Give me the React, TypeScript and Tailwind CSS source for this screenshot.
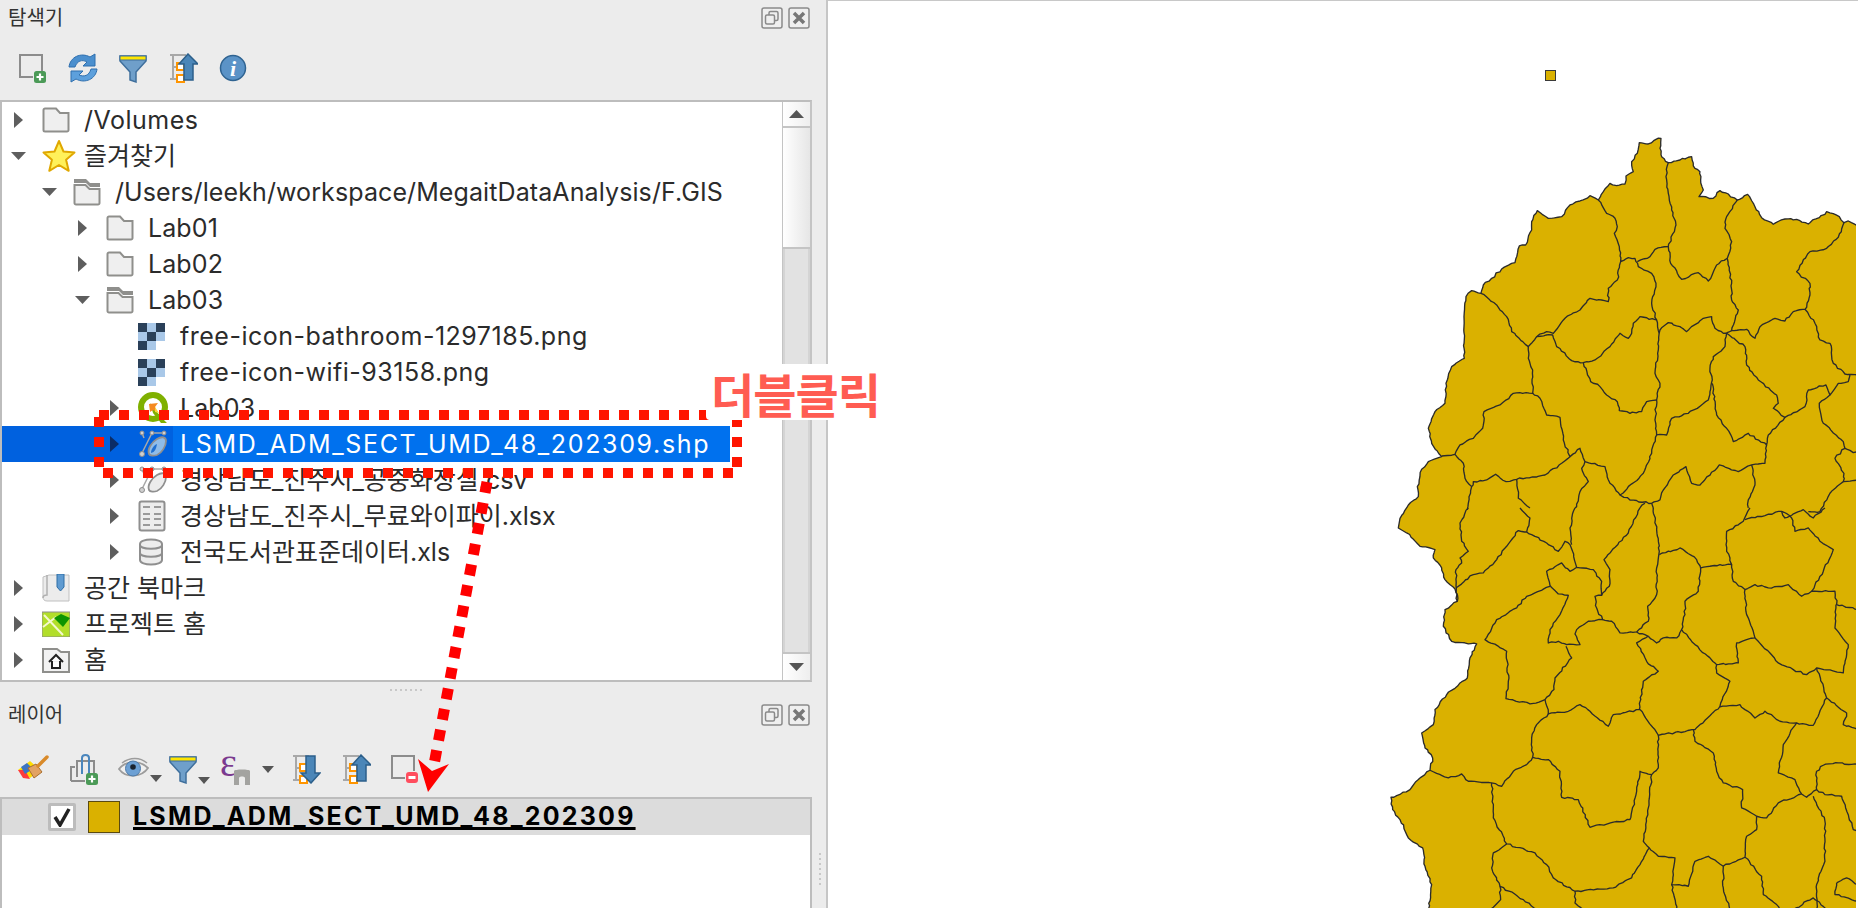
import type { ReactNode } from "react";

const uiFont = "font-['Inter','Noto_Sans_CJK_KR',sans-serif]";

// map traced in 3x crop coordinates, the lower crop starts 1164 units further down
const coastTop =
  "1434,318 1405,303 1392,308 1378,290 1340,275 1318,293 1298,300 1285,312 1250,298 1215,297 1180,313 1145,293 1125,260 1103,223 1072,240 1045,222 1020,212 1000,235 957,230 970,210 962,180 960,155 945,145 935,110 900,120 865,128 845,110 840,85 843,55 828,58 805,72 778,68 772,100 755,125 760,155 738,168 735,192 710,197 690,190 670,215 655,240 630,227 600,243 570,255 545,290 505,295 472,272 455,305 455,330 437,375 418,378 405,428 365,447 335,475 310,495 303,520 275,512 258,530 252,620 253,715 215,740 198,790 195,850 165,875 145,925 155,970 185,1010 145,1025 125,1048 112,1100 115,1130 85,1155 60,1195";
const coastBottom =
  "55,60 80,75 120,115 165,125 160,150 185,180 195,215 225,243 232,280 195,305 190,355 215,400 265,408 290,408 270,450 262,510 240,525 200,560 165,605 160,650 125,675 135,720 158,750 150,787 115,815 90,845 50,863 33,868 38,905 60,935 85,990 128,1020 135,1075 155,1130 145,1205";

const linesTop = [
  "1072,240 1040,290 1035,325 1055,365 1042,415 1010,435 985,483 955,458 905,478 872,430 865,380 888,315 875,270 865,220 858,170 865,128",
  "865,380 825,388 810,410 772,425",
  "655,240 680,280 705,295 712,320 703,340 718,380 722,425 745,413 765,415 775,440 815,460 828,490 815,550 830,600 838,640",
  "722,425 712,480 685,505 685,545 630,535 600,570 555,595 520,640 500,635 470,650 445,680 395,635 380,590 350,555 303,520",
  "445,680 445,715 458,750 458,820 400,820 360,855 312,875 308,925 280,955 240,975 225,1003 185,1008",
  "458,820 480,835 500,885 540,892 550,960 570,1010 545,1030 495,1065 410,1078 378,1085 347,1063 320,1080 280,1085 275,1100 255,1075 250,1030 225,1003",
  "470,650 518,645 530,680 575,722 610,728 645,720 690,680 720,640 745,655 755,640 760,610 780,590 828,600",
  "610,728 632,785 660,800 680,825 712,845 718,872 750,880 785,875 800,845 830,840",
  "1042,415 1055,490 1055,540 1075,570 1055,632 1030,640 1005,625 995,590 970,595 920,635 900,620 865,608 840,630 833,700 825,760 840,790 830,840 825,900 830,945 860,945 875,895 925,880 985,840 990,815 997,780 990,745 1000,710 1035,680 1040,640",
  "1040,640 1095,680 1100,735 1135,780 1190,825 1195,850 1180,865 1215,892 1165,945 1160,975 1105,940 1060,965 1040,925 1010,885 997,790",
  "1055,632 1100,628 1125,655 1140,620 1185,595 1215,603 1240,575 1275,568 1290,525 1290,490 1250,455 1290,395 1340,385 1375,352 1392,308",
  "1275,568 1305,610 1320,660 1350,670 1360,730 1395,762 1434,765",
  "1410,765 1405,785 1375,790 1350,825 1338,795 1285,810 1275,860 1215,892",
  "1350,825 1318,850 1330,910 1390,965 1395,985 1420,998 1434,995",
  "1395,985 1365,1015 1392,1060 1390,1085 1350,1120 1320,1175 1285,1175",
  "1390,1085 1434,1080",
  "830,945 815,1000 790,1060 720,1125 690,1090 675,1040 615,1025 600,985 570,1010",
  "1160,975 1155,1030 1115,1035 1075,1055 1018,1035 960,1095 935,1090 918,1040 880,1065 850,1110 840,1140 815,1150 750,1140 720,1125",
  "1115,1035 1125,1095 1105,1140 1105,1164",
  "615,1025 605,1045 625,1085 600,1115 590,1160 585,1164",
  "410,1078 415,1135 450,1164",
  "275,1100 262,1170",
  "815,1150 820,1164",
  "795,1150 780,1164",
];

const linesBottom = [
  "265,0 240,45 245,100 265,130 240,150 245,165 228,185 232,280",
  "228,240 280,200 310,195 350,155 380,115 415,68 440,72 500,105 535,130 555,100 570,110 590,178 640,185 665,220 665,262 645,265 650,300 668,335 625,340 590,365 585,378 600,410 560,410 535,400 505,405 510,365 540,320 565,262 535,258 510,232 500,190 545,165 570,190 590,178",
  "510,235 440,265 410,300 350,335 315,395 380,430 385,520 378,572 450,588 495,575 522,545 525,510 575,450 558,415",
  "440,72 450,30 420,0",
  "585,0 570,60 575,110",
  "780,0 745,75 672,155 690,185 688,235 665,262",
  "820,0 830,65 838,130 830,180 830,260 803,295 805,340 770,372 720,375 695,340 668,335",
  "838,140 900,120 950,155 962,180 1020,170 1055,170 1040,130 1040,70 1090,40 1110,0",
  "962,180 955,250 915,280 915,320 905,365 945,410 1005,465 1010,470 1075,465 1070,405 1125,390 1100,320 1095,245 1060,220 1055,170",
  "1095,245 1125,230 1165,240 1225,230 1265,265 1295,250 1330,190 1360,125 1320,100 1285,60 1245,70 1235,30 1205,10 1095,35",
  "1205,10 1215,30 1270,5 1300,30 1335,0",
  "1295,250 1365,250 1370,290 1434,305",
  "1368,290 1365,360 1405,410 1390,495 1310,480 1280,500 1240,485 1195,465 1170,435 1125,390",
  "770,372 805,385 770,405 800,460 835,490 790,520 778,605 700,620 685,655 630,610 600,590 565,610 505,618 495,575",
  "805,385 830,405 850,390 890,390 905,365",
  "1010,470 1010,495 1050,520 1020,595 945,665 835,682 780,605",
  "1020,597 1080,590 1125,630 1155,610 1200,640 1250,645 1300,652 1340,570 1310,480",
  "1340,570 1400,615 1390,650 1434,665",
  "1250,645 1210,710 1195,795 1245,815 1265,858 1280,868 1310,845 1310,790 1330,772 1375,765 1434,770",
  "1310,845 1335,860 1385,865 1420,965 1434,970",
  "1265,858 1195,885 1160,930 1130,925 1085,900 1088,845 1030,825 1010,790 1000,735 945,700 940,665",
  "835,682 835,780 815,800 780,790 770,850 750,935 630,958 595,875 545,868 540,790 505,755 458,748 455,690 470,650 505,618",
  "458,748 440,770 400,790 365,835 335,825 265,820 245,798 205,810 150,787",
  "335,825 340,930 380,1008 465,1035 500,1070 520,1110 585,1150 700,1140 755,1110 780,1070 808,1020 790,1000 805,900 815,800",
  "808,1020 835,1045 885,1050 875,1130 925,1135 945,1060 985,1045 1030,1075 1095,1048 1100,985 1130,965 1130,925",
  "1095,1048 1145,1105 1150,1160 1190,1190 1200,1205",
  "1030,1075 1030,1140 1050,1205",
  "875,1130 890,1205",
  "380,1008 340,1035 335,1080 360,1135 430,1175 470,1205",
  "360,1135 362,1175 330,1205",
  "585,1150 585,1185 610,1205",
  "1300,865 1335,940 1335,1060 1310,1130 1310,1205",
  "1370,1125 1400,1110 1434,1130",
  "1370,1125 1365,1160 1434,1180",
  "1240,1205 1300,1170 1340,1205",
];

let seed = 7;
const rand = () => {
  seed = (seed * 9301 + 49297) % 233280;
  return seed / 233280 - 0.5;
};

// break the straight traced segments up so borders look like a real boundary file
function rough(line: string, yOffset: number) {
  const p = line.split(" ").map((s) => {
    const [x, y] = s.split(",").map(Number);
    return [x, y + yOffset];
  });
  const out: string[] = [];
  for (let i = 0; i < p.length - 1; i++) {
    const [x1, y1] = p[i];
    const [x2, y2] = p[i + 1];
    const n = Math.max(1, Math.round(Math.hypot(x2 - x1, y2 - y1) / 10));
    for (let k = 0; k < n; k++) {
      const t = k / n;
      const j = k === 0 ? 0 : 5;
      out.push(`${(x1 + (x2 - x1) * t + rand() * j).toFixed(1)},${(y1 + (y2 - y1) * t + rand() * j).toFixed(1)}`);
    }
  }
  const last = p[p.length - 1];
  out.push(`${last[0]},${last[1]}`);
  return out.join(" ");
}

const coast = rough(coastTop, 0) + " " + rough(coastBottom, 1164);
const borders = [...linesTop.map((l) => rough(l, 0)), ...linesBottom.map((l) => rough(l, 1164))];

function Ico({ children, w = 30, h = 30 }: { children: ReactNode; w?: number; h?: number }) {
  return (
    <svg width={w} height={h} viewBox={`0 0 ${w} ${h}`} className="block shrink-0">
      {children}
    </svg>
  );
}

const FolderClosed = () => (
  <Ico w={28} h={26}>
    <path d="M1.500 3a1.500 1.500 0 0 1 1.500-1.500h11L18 6h8.500v17a1.500 1.500 0 0 1-1.500 1.500H3A1.500 1.500 0 0 1 1.500 23z" fill="#efefef" stroke="#8f8f8c" strokeWidth="2" />
  </Ico>
);

const FolderOpen = () => (
  <Ico w={28} h={28}>
    <path d="M1 1h12l4 4h10v4H17l-4-4H1z" fill="#8f8f8c" />
    <path d="M1.500 7h11l4 4h10v14a1.500 1.500 0 0 1-1.500 1.500H3A1.500 1.500 0 0 1 1.500 25z" fill="#efefef" stroke="#8f8f8c" strokeWidth="2" />
  </Ico>
);

const Star = () => (
  <Ico w={34} h={34}>
    <path d="M17 2l4.500 10.500 11 1-8.400 7.300 2.600 11L17 26l-9.700 5.800 2.600-11L1.500 13.500l11-1z" fill="#fff15a" stroke="#e0a800" strokeWidth="2" strokeLinejoin="round" />
  </Ico>
);

const Raster = () => (
  <div className="grid h-[27px] w-[27px] shrink-0 grid-cols-3 grid-rows-3">
    {["#2a4059", "#a9c8e8", "#2a4059", "#a9c8e8", "#2a4059", "#a9c8e8", "#2a4059", "#a9c8e8", "#ffffff"].map((c, i) => (
      <div key={i} style={{ background: c }} />
    ))}
  </div>
);

const QgisLogo = () => (
  <Ico w={32} h={32}>
    <circle cx="15" cy="15" r="12" fill="none" stroke="#7fb000" strokeWidth="6" />
    <path d="M12 11l10 13 7 7-6 0-8-10z" fill="#7fb000" />
    <path d="M11 12l9-1-3 4 2 5-4-2-3 2z" fill="#f58a1f" />
    <path d="M17 15l4 6-4-1z" fill="#f4d63a" />
  </Ico>
);

const VectorIcon = ({ selected }: { selected?: boolean }) => (
  <Ico w={30} h={30}>
    <path d="M4 24L14 4h12" fill="none" stroke="#a8a8a8" strokeWidth="1.500" />
    <path d="M4 4l2 5" fill="none" stroke="#a8a8a8" strokeWidth="1.500" />
    <circle cx="4" cy="4" r="2" fill="#d0d0d0" stroke="#8c8c8c" />
    <circle cx="14" cy="4" r="2" fill="#d0d0d0" stroke="#8c8c8c" />
    <circle cx="26" cy="4" r="2" fill="#d0d0d0" stroke="#8c8c8c" />
    <circle cx="4" cy="25" r="2.500" fill="#d0d0d0" stroke="#8c8c8c" />
    <path d="M11 25c-2-5 3-12 8-15s9-2 9 2c0 5-4 12-9 14-3 1-7 1-8-1z" fill={selected ? "#8fbce8" : "#ececec"} stroke="#8f8f8f" strokeWidth="1.800" />
    {selected && <path d="M13 24c0-4 3-8 6-9-1 5-2 8-6 9z" fill="#1f6fd0" />}
  </Ico>
);

const TableIcon = () => (
  <Ico w={28} h={32}>
    <rect x="1.500" y="1.500" width="25" height="29" rx="2" fill="#ededed" stroke="#8f8f8f" strokeWidth="2" />
    <path d="M5 7h7M16 7h7M5 14h7M16 14h7M5 19h7M16 19h7M5 25h7M16 25h7" stroke="#9a9a9a" strokeWidth="2" />
  </Ico>
);

const DbIcon = () => (
  <Ico w={26} h={28}>
    <path d="M2 6c0-6 22-6 22 0v16c0 6-22 6-22 0z" fill="#ededed" stroke="#8f8f8f" strokeWidth="2" />
    <path d="M2 7c0 5 22 5 22 0M2 15c0 5 22 5 22 0" fill="none" stroke="#8f8f8f" strokeWidth="2" />
  </Ico>
);

const BookmarkIcon = () => (
  <Ico w={28} h={28}>
    <path d="M1 3l6-2h20v26H5c-3 0-4-2-4-4z" fill="#ececec" stroke="#c0c0c0" />
    <path d="M5 1v20c-2 0-4 1-4 3" fill="none" stroke="#b0b0b0" strokeWidth="1.500" />
    <path d="M15 0h7v13l-3.500 4-3.500-4z" fill="#5f9bd1" stroke="#2f6ea6" />
  </Ico>
);

const ProjectHome = () => (
  <Ico w={28} h={26}>
    <rect x="0" y="1" width="28" height="25" fill="#b2de2a" stroke="#8d8d8a" />
    <path d="M2 4l19 20M1 16l13-10" stroke="#f5f8d0" strokeWidth="2" />
    <path d="M12 7l7-4 9 4-7 9z" fill="#0c9400" />
  </Ico>
);

const HomeIcon = () => (
  <Ico w={28} h={26}>
    <path d="M1 2h14l4 3h8v20H1z" fill="#f2f2f2" stroke="#8f8f8c" strokeWidth="2" />
    <path d="M7 15l7-7 7 7M10 14v7h8v-7" fill="#fff" stroke="#222" strokeWidth="2" />
  </Ico>
);

const PlusBadge = ({ x, y }: { x: number; y: number }) => (
  <g transform={`translate(${x} ${y})`}>
    <rect width="12" height="12" rx="2.500" fill="#4b9a57" />
    <path d="M6 2.500v7M2.500 6h7" stroke="#fff" strokeWidth="2.200" />
  </g>
);

const NewConnection = () => (
  <Ico>
    <rect x="2" y="2" width="22" height="22" fill="none" stroke="#8c8c8c" strokeWidth="2" />
    <rect x="15" y="18" width="12" height="12" fill="#ececec" />
    <PlusBadge x={16} y={18} />
  </Ico>
);

const Refresh = () => (
  <Ico>
    <path d="M1 14C2 4 13-1 22 4l5-3v12H15l4-4c-5-3-10-1-12 5z" fill="#4b8fce" stroke="#2f6fae" />
    <path d="M29 16c-1 10-12 15-21 10l-5 3V18h12l-4 4c5 2 10 1 12-6z" fill="#5da0dc" stroke="#2f6fae" />
  </Ico>
);

const Funnel = () => (
  <Ico>
    <path d="M2 3h26v5L18 19v10l-6-2v-8L2 8z" fill="#6f9fca" stroke="#3f6f9c" strokeWidth="1.500" />
    <rect x="2" y="3" width="26" height="4" fill="#ffe600" stroke="#3f6f9c" strokeWidth="1" />
  </Ico>
);

const TreeBase = () => (
  <g>
    <path d="M2 2h16M5 2v24M2 26h8M5 14h4" stroke="#a8a8a8" strokeWidth="2" fill="none" />
    <rect x="9" y="10" width="7" height="7" fill="#fff" stroke="#ff9500" strokeWidth="2" />
    <rect x="9" y="22" width="7" height="7" fill="#fff" stroke="#ff9500" strokeWidth="2" />
  </g>
);

const CollapseAll = () => (
  <Ico>
    <TreeBase />
    <path d="M20 1l10 10h-5v16h-9V11h-5z" fill="#4b86b8" stroke="#2c5f8a" strokeWidth="1.500" />
  </Ico>
);

const ExpandAll = () => (
  <Ico>
    <TreeBase />
    <path d="M20 29L10 19h5V2h9v17h5z" fill="#4b86b8" stroke="#2c5f8a" strokeWidth="1.500" />
  </Ico>
);

const Info = () => (
  <Ico>
    <circle cx="15" cy="15" r="12.500" fill="#5b93c7" stroke="#2f6391" strokeWidth="1.500" />
    <text x="15" y="23" textAnchor="middle" fontFamily="Liberation Serif" fontStyle="italic" fontWeight="700" fontSize="22" fill="#fff">
      i
    </text>
  </Ico>
);

const MiniArrow = () => (
  <svg width="12" height="7" viewBox="0 0 12 7" className="block shrink-0">
    <path d="M0 0h12L6 7z" fill="#555" />
  </svg>
);

const Brush = () => (
  <Ico w={32} h={30}>
    <path d="M1 16l12-9 10 9-10 8z" fill="#ffdc00" />
    <path d="M1 16l5 8 7 1-5-9z" fill="#ff3b3b" />
    <path d="M4 13l6-4 6 6-8 5z" fill="#3d74c4" />
    <path d="M11 14l8-4 6 8-8 6z" fill="#e2a263" stroke="#a86f2e" />
    <path d="M21 12l9-9" stroke="#d98a2a" strokeWidth="3.500" strokeLinecap="round" />
  </Ico>
);

const AddGroup = () => (
  <Ico w={30} h={32}>
    <path d="M3 28V14h4M3 28h14" fill="none" stroke="#8c8c8c" strokeWidth="2" />
    <path d="M9 24V8h17v14" fill="none" stroke="#8c8c8c" strokeWidth="2" />
    <path d="M14 21V5c0-4 7-4 7 0v15" fill="none" stroke="#4a86bd" strokeWidth="2" />
    <PlusBadge x={18} y={20} />
  </Ico>
);

const Eye = () => (
  <Ico w={32} h={26}>
    <path d="M1 13c6-8 20-10 29-1-6 9-22 11-29 1z" fill="#f0f0f0" stroke="#9c9c9c" strokeWidth="1.800" />
    <path d="M4 7c8-6 18-6 25 0" fill="none" stroke="#9c9c9c" strokeWidth="1.500" />
    <circle cx="15" cy="12.500" r="7.500" fill="#6ca0d4" stroke="#4d7aa8" />
    <circle cx="15" cy="11" r="2.800" fill="#1a2430" />
  </Ico>
);

const Epsilon = () => (
  <div className="relative h-[32px] w-[30px] shrink-0">
    <span className="absolute left-0 top-[-12px] font-['Liberation_Serif',serif] text-[40px] leading-[44px] text-[#7b3a8f]">ε</span>
    <svg width="16" height="16" viewBox="0 0 16 16" className="absolute bottom-0 right-0 block">
      <path d="M0 2c0-2 16-2 16 0v14h-5V9c0-2-6-2-6 0v7H0z" fill="#a3a3a0" />
    </svg>
  </div>
);

const RemoveLayer = () => (
  <Ico w={30} h={30}>
    <rect x="2" y="2" width="22" height="22" fill="none" stroke="#8c8c8c" strokeWidth="2" />
    <rect x="15" y="17" width="14" height="13" fill="#ececec" />
    <rect x="16" y="18" width="12" height="11" rx="3" fill="#ff4d5e" />
    <rect x="18.500" y="22" width="7" height="3" fill="#fff" />
  </Ico>
);

const RestoreBtn = () => (
  <Ico w={22} h={22}>
    <rect x="1" y="1" width="20" height="20" rx="2" fill="#efefef" stroke="#8a8a8a" strokeWidth="1.500" />
    <rect x="8" y="4.500" width="9" height="9" rx="1.500" fill="none" stroke="#8a8a8a" strokeWidth="1.500" />
    <rect x="4.500" y="8" width="9" height="9" rx="1.500" fill="#efefef" stroke="#8a8a8a" strokeWidth="1.500" />
  </Ico>
);

const CloseBtn = () => (
  <Ico w={22} h={22}>
    <rect x="1" y="1" width="20" height="20" rx="2" fill="#efefef" stroke="#8a8a8a" strokeWidth="1.500" />
    <path d="M6 6l10 10M16 6L6 16" stroke="#777" strokeWidth="3.500" />
  </Ico>
);

function Caret({ dir, selected }: { dir?: "right" | "down"; selected?: boolean }) {
  return (
    <div className="flex h-full w-[30px] shrink-0 items-center justify-center">
      {dir === "right" && (
        <svg width="9" height="16" viewBox="0 0 9 16" className="block">
          <path d="M0 0l9 8-9 8z" fill={selected ? "#0b2c66" : "#5e5e5e"} />
        </svg>
      )}
      {dir === "down" && (
        <svg width="15" height="8" viewBox="0 0 15 8" className="block">
          <path d="M0 0h15L7.500 8z" fill="#5e5e5e" />
        </svg>
      )}
    </div>
  );
}

const indents = ["pl-[1px]", "pl-[32px]", "pl-[65px]", "pl-[97px]"];

type Row = { depth: number; dir?: "right" | "down"; icon: ReactNode; label: string; track?: string; selected?: boolean };

const rows: Row[] = [
  { depth: 0, dir: "right", icon: <FolderClosed />, label: "/Volumes", track: "tracking-[0.5px]" },
  { depth: 0, dir: "down", icon: <Star />, label: "즐겨찾기" },
  { depth: 1, dir: "down", icon: <FolderOpen />, label: "/Users/leekh/workspace/MegaitDataAnalysis/F.GIS", track: "tracking-[0.1px]" },
  { depth: 2, dir: "right", icon: <FolderClosed />, label: "Lab01", track: "tracking-[0.1px]" },
  { depth: 2, dir: "right", icon: <FolderClosed />, label: "Lab02", track: "tracking-[0.1px]" },
  { depth: 2, dir: "down", icon: <FolderOpen />, label: "Lab03", track: "tracking-[0.1px]" },
  { depth: 3, icon: <Raster />, label: "free-icon-bathroom-1297185.png", track: "tracking-[0.5px]" },
  { depth: 3, icon: <Raster />, label: "free-icon-wifi-93158.png", track: "tracking-[0.5px]" },
  { depth: 3, dir: "right", icon: <QgisLogo />, label: "Lab03", track: "tracking-[0.1px]" },
  { depth: 3, dir: "right", icon: <VectorIcon selected />, label: "LSMD_ADM_SECT_UMD_48_202309.shp", track: "tracking-[1.65px]", selected: true },
  { depth: 3, dir: "right", icon: <VectorIcon />, label: "경상남도_진주시_공중화장실.csv" },
  { depth: 3, dir: "right", icon: <TableIcon />, label: "경상남도_진주시_무료와이파이.xlsx" },
  { depth: 3, dir: "right", icon: <DbIcon />, label: "전국도서관표준데이터.xls" },
  { depth: 0, dir: "right", icon: <BookmarkIcon />, label: "공간 북마크" },
  { depth: 0, dir: "right", icon: <ProjectHome />, label: "프로젝트 홈" },
  { depth: 0, dir: "right", icon: <HomeIcon />, label: "홈" },
];

function TreeRow({ row }: { row: Row }) {
  return (
    <div className={`flex h-9 items-center ${indents[row.depth]} ${row.selected ? "w-[728px] bg-[#0061df] text-white" : "text-[#2b2b2b]"}`}>
      <Caret dir={row.dir} selected={row.selected} />
      <div className="flex h-full w-[44px] shrink-0 items-center pl-[9px]">{row.icon}</div>
      <div className={`flex h-full flex-1 items-center whitespace-nowrap pl-[7px] pt-[1px] text-[25px] ${row.track ?? ""} ${row.selected ? "bg-[#0071ee]" : ""}`}>{row.label}</div>
    </div>
  );
}

function PanelTitle({ title }: { title: string }) {
  return (
    <div className="flex h-12 items-center justify-between pl-2 pr-[2px] pb-[12px]">
      <span className="text-[20px] text-[#333]">{title}</span>
      <div className="flex items-center gap-[5px]">
        <RestoreBtn />
        <CloseBtn />
      </div>
    </div>
  );
}

function Scrollbar() {
  return (
    <div className="flex w-[28px] shrink-0 flex-col border-l border-[#c4c4c4]">
      <div className="flex h-[26px] items-center justify-center border-b-2 border-[#c4c4c4] bg-gradient-to-r from-white to-[#eeeeee]">
        <svg width="15" height="8" viewBox="0 0 15 8" className="block">
          <path d="M7.500 0L15 8H0z" fill="#555" />
        </svg>
      </div>
      <div className="h-[121px] border-b-2 border-[#c4c4c4] bg-gradient-to-r from-white to-[#e6e6e6]" />
      <div className="flex-1 border-x-2 border-[#d4d4d4] bg-[#e2e2e2]" />
      <div className="flex h-[28px] items-center justify-center border-t-2 border-[#c4c4c4] bg-gradient-to-r from-white to-[#eeeeee]">
        <svg width="15" height="8" viewBox="0 0 15 8" className="block">
          <path d="M0 0h15L7.500 8z" fill="#555" />
        </svg>
      </div>
    </div>
  );
}

export default function App() {
  return (
    <div className={`relative flex h-[908px] w-[1858px] overflow-hidden bg-white ${uiFont}`}>
      <aside className="flex w-[828px] shrink-0 flex-col border-r-2 border-[#c6c6c6] bg-[#ececec] pr-[14px]">
        {/* 탐색기 */}
        <PanelTitle title="탐색기" />
        <div className="flex h-[52px] items-center gap-[20px] pl-[18px] pb-[12px]">
          <NewConnection />
          <Refresh />
          <Funnel />
          <CollapseAll />
          <Info />
        </div>
        <div className="flex h-[582px] border-2 border-b-2 border-[#bdbdbd] border-r-[#c4c4c4] bg-white">
          <div className="min-w-0 flex-1">
            {rows.map((row, i) => (
              <TreeRow key={i} row={row} />
            ))}
          </div>
          <Scrollbar />
        </div>
        <div className="flex h-[15px] items-center justify-center gap-[3px]">
          {[0, 1, 2, 3, 4, 5, 6].map((i) => (
            <span key={i} className="h-[2px] w-[2px] bg-[#c8c8c8]" />
          ))}
        </div>

        {/* 레이어 */}
        <PanelTitle title="레이어" />
        <div className="flex h-[52px] items-center pl-[17px] pb-[4px]">
          <Brush />
          <div className="ml-[19px]">
            <AddGroup />
          </div>
          <div className="ml-[20px] flex items-end">
            <Eye />
            <MiniArrow />
          </div>
          <div className="ml-[6px] flex items-end">
            <Funnel />
            <MiniArrow />
          </div>
          <div className="ml-[10px]">
            <Epsilon />
          </div>
          <div className="ml-[12px]">
            <MiniArrow />
          </div>
          <div className="ml-[17px]">
            <ExpandAll />
          </div>
          <div className="ml-[20px]">
            <CollapseAll />
          </div>
          <div className="ml-[19px]">
            <RemoveLayer />
          </div>
        </div>
        <div className="flex-1 border-x-2 border-t-2 border-[#bdbdbd] bg-white">
          <div className="flex h-[36px] items-center bg-[#dcdcdc] pl-[46px]">
            <div className="flex h-[28px] w-[28px] items-center justify-center rounded-[2px] border-[3px] border-[#bcbcbc] bg-white">
              <svg width="18" height="20" viewBox="0 0 18 20" className="block">
                <path d="M2 10l5 8L16 2" fill="none" stroke="#222" strokeWidth="3.500" />
              </svg>
            </div>
            <div className="ml-[12px] h-[32px] w-[32px] border border-[#5a4a10] bg-[#dab100]" />
            <div className="ml-[13px] whitespace-nowrap text-[25px] font-bold tracking-[2.2px] text-black underline decoration-[3px]">LSMD_ADM_SECT_UMD_48_202309</div>
          </div>
        </div>
      </aside>

      <main className="min-w-0 flex-1 border-t border-[#c8c8c8] bg-white">
        <svg viewBox="828 1 1028 907" width="1028" height="907" className="block">
          <rect x="1545.500" y="70.500" width="10" height="10" fill="#dab100" stroke="#3a3a3a" />
          <g transform="translate(1380 120) scale(0.3333)">
            <polygon points={coast + " 1500,2400 1500,300"} fill="#dab100" />
            <polyline points={coast} fill="none" stroke="#2b2b2b" strokeWidth="4" strokeLinejoin="round" />
            {borders.map((b, i) => (
              <polyline key={i} points={b} fill="none" stroke="#2b2b2b" strokeWidth="4" strokeLinejoin="round" />
            ))}
          </g>
        </svg>
      </main>

      {/* splitter grip on the dock edge */}
      <div className="absolute left-[819px] top-[853px] flex flex-col gap-[3px]">
        {[0, 1, 2, 3, 4, 5, 6].map((i) => (
          <span key={i} className="h-[2px] w-[2px] bg-[#c8c8c8]" />
        ))}
      </div>

      {/* red annotation */}
      <svg viewBox="0 0 1858 908" width="1858" height="908" className="pointer-events-none absolute inset-0 block">
        <rect x="99" y="415" width="638" height="58" fill="none" stroke="#ff1500" strokeWidth="10" strokeDasharray="10 10" />
        <line x1="487" y1="482" x2="433" y2="770" stroke="#ff0000" strokeWidth="11" strokeDasharray="11 10" />
        <polygon points="418,759 432,771 449,764 428,792" fill="#ff0000" />
      </svg>
      <div className="absolute left-[706px] top-[364px] flex h-[56px] items-center rounded-[4px] bg-white px-[5px] font-['Noto_Sans_CJK_KR',sans-serif] text-[47px] font-bold leading-none tracking-[-1px] text-[#ff5c52]">
        더블클릭
      </div>
    </div>
  );
}
